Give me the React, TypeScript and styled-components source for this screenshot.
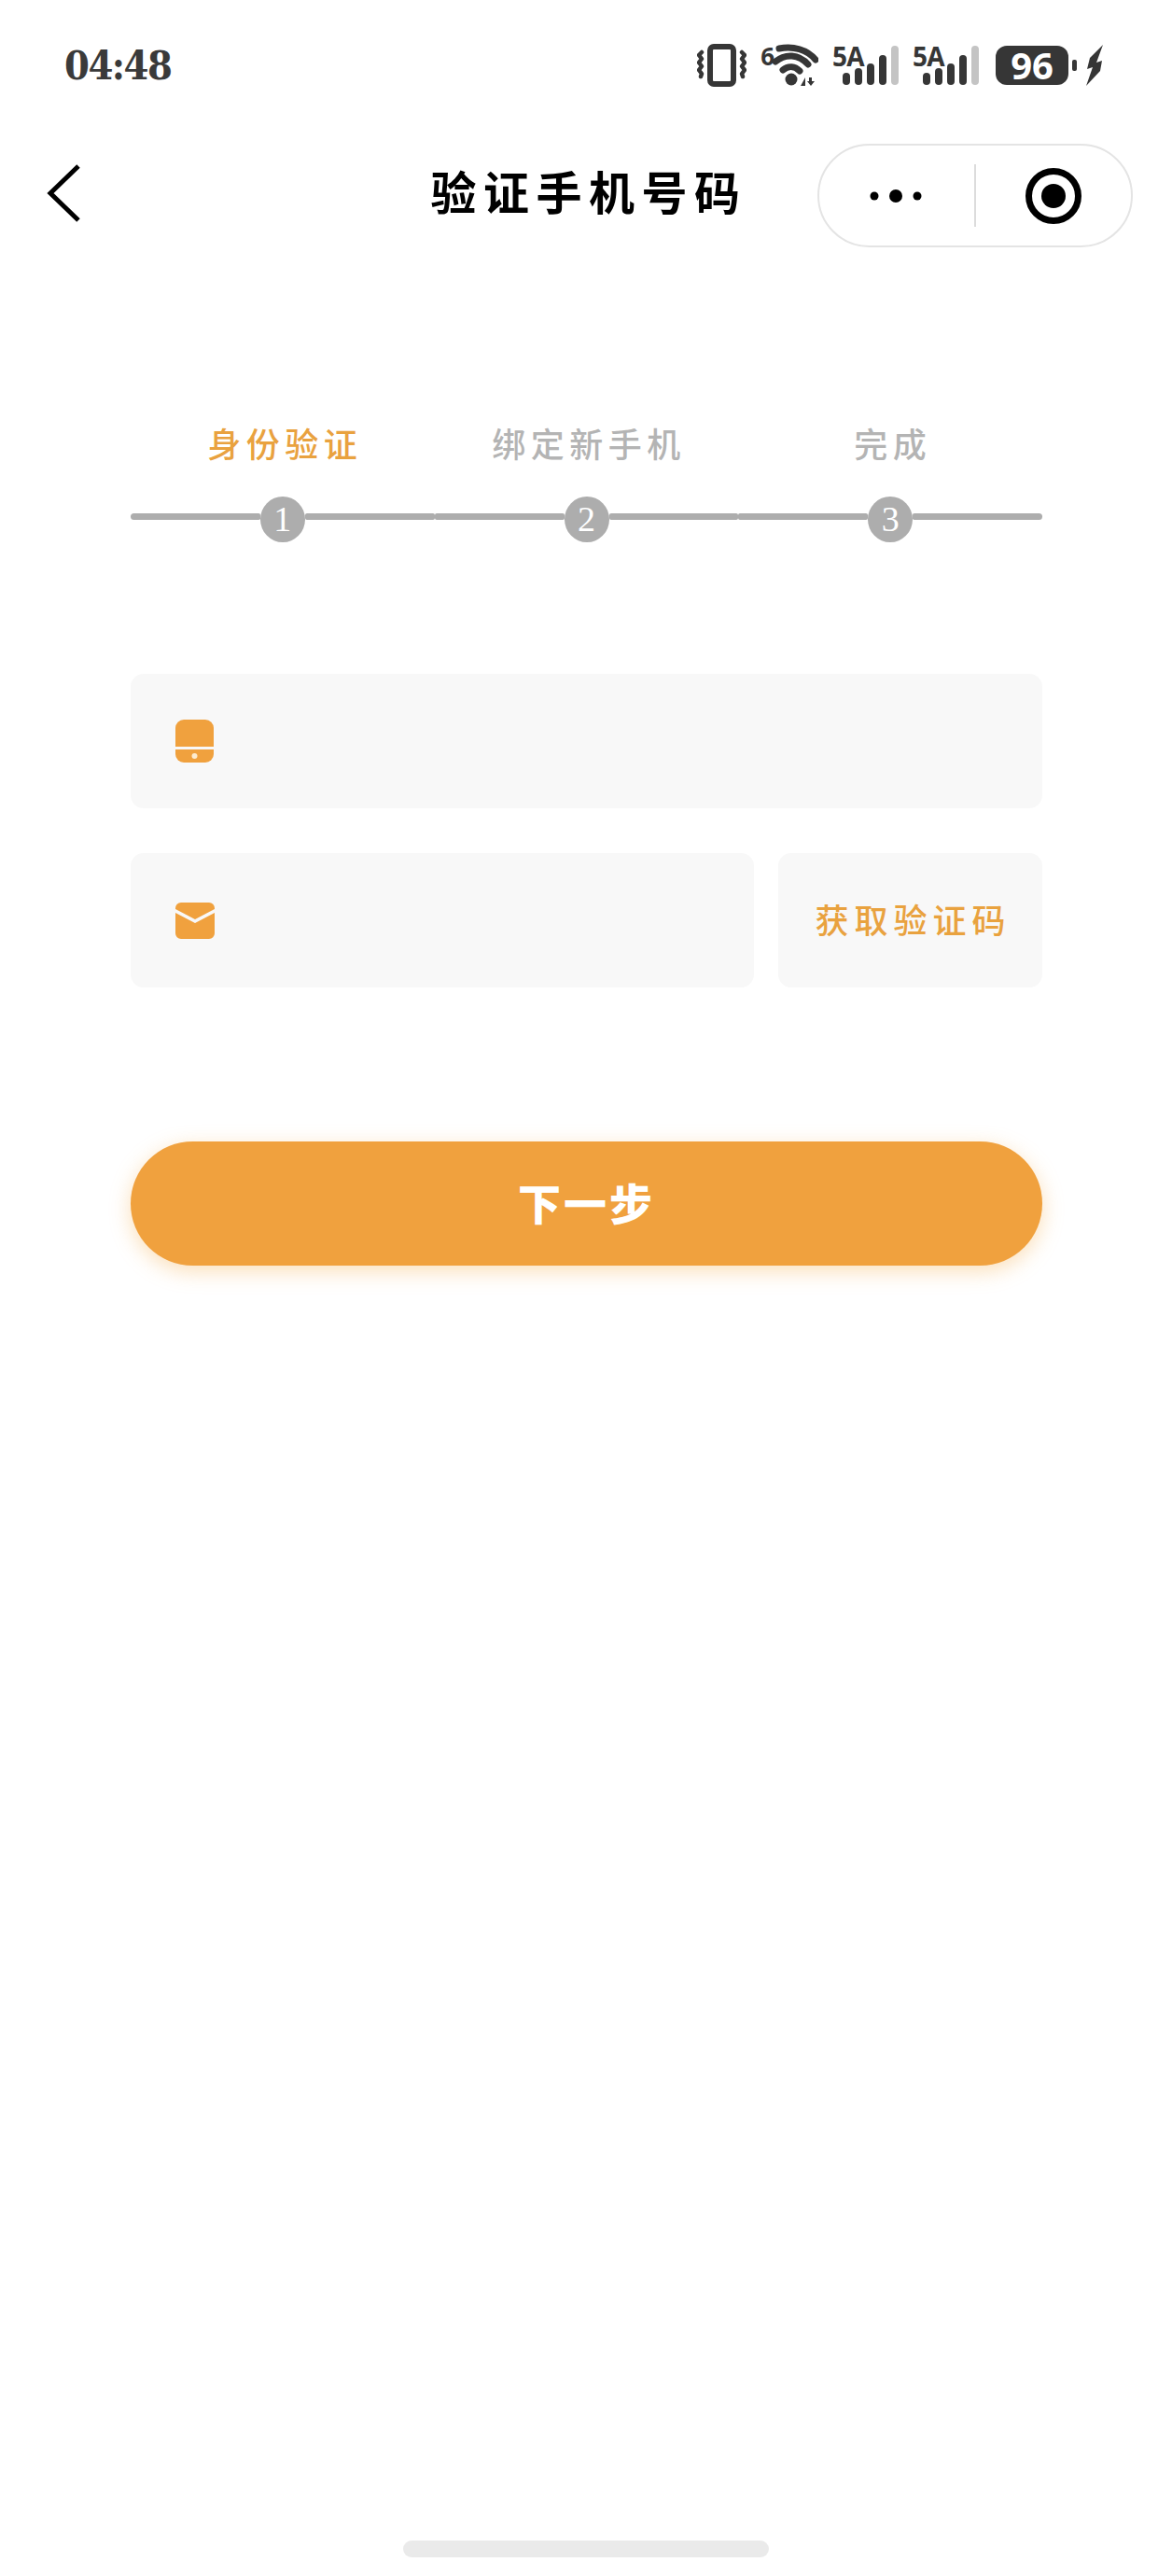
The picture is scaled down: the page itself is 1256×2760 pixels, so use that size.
import React from "react";
import styled, { createGlobalStyle } from "styled-components";

const GlobalStyle = createGlobalStyle`
  html, body {
    margin: 0;
    padding: 0;
    background: #fff;
  }
  * {
    box-sizing: border-box;
  }
`;

const CJK = `"Noto Sans CJK SC", "Liberation Sans", sans-serif`;

const Page = styled.div`
  width: 1256px;
  height: 2760px;
  display: flex;
  flex-direction: column;
  background: #fff;
  font-family: ${CJK};
`;

const StatusBar = styled.div`
  height: 140px;
  padding: 0 74px 0 69px;
  display: flex;
  align-items: center;
  justify-content: space-between;
`;

const Time = styled.div`
  font-family: "DejaVu Serif Condensed", "DejaVu Serif", serif;
  font-weight: 700;
  font-size: 43px;
  letter-spacing: -1.5px;
  color: #3a3a3a;
`;

const StatusIcons = styled.div`
  display: flex;
  align-items: center;
  gap: 15px;
`;

const WifiGroup = styled.div`
  display: flex;
  align-items: flex-start;
`;

const WifiLabel = styled.span`
  font-family: "Open Sans", sans-serif;
  font-weight: 700;
  font-size: 26px;
  line-height: 26px;
  color: #363636;
  margin-right: -3px;
`;

const SignalGroup = styled.div`
  display: grid;
`;

const SignalLabel = styled.span`
  grid-area: 1 / 1;
  font-family: "Open Sans", sans-serif;
  font-weight: 700;
  font-size: 28px;
  line-height: 24px;
  letter-spacing: -0.8px;
  color: #363636;
`;

const SignalBars = styled.svg`
  grid-area: 1 / 1;
  margin-left: 11px;
`;

const BatteryGroup = styled.div`
  display: flex;
  align-items: center;
  margin-left: 3px;
`;

const Battery = styled.div`
  width: 78px;
  height: 42px;
  border-radius: 12px;
  background: #363636;
  color: #fff;
  font-family: "Open Sans", sans-serif;
  font-weight: 700;
  font-size: 40px;
  line-height: 42px;
  text-align: center;
`;

const BatteryNub = styled.div`
  width: 5px;
  height: 12px;
  margin: 0 10px 0 4px;
  border-radius: 2px;
  background: #363636;
`;

const NavBar = styled.div`
  margin-top: 14px;
  height: 111px;
  display: grid;
  grid-template-columns: minmax(0, 1fr) auto minmax(0, 1fr);
  align-items: center;
`;

const BackIcon = styled.svg`
  width: 40px;
  height: 66px;
  margin-left: 49px;
  margin-top: -5px;
`;

const Title = styled.div`
  font-size: 49px;
  font-weight: 700;
  letter-spacing: 7.5px;
  color: #000;
  line-height: 60px;
  margin-top: -12px;
  margin-left: 6px;
`;

const Capsule = styled.div`
  justify-self: end;
  width: 338px;
  height: 111px;
  margin-right: 42px;
  border: 2px solid #e4e4e4;
  border-radius: 56px;
  display: flex;
  align-items: center;
`;

const CapsuleSide = styled.div`
  flex: 1;
  height: 100%;
  display: flex;
  align-items: center;
  justify-content: center;
`;

const CapsuleDivider = styled.div`
  width: 2px;
  height: 67px;
  background: #dcdcdc;
`;

const Stepper = styled.div`
  margin-top: 189px;
  padding: 0 139px 0 140px;
  display: grid;
  grid-template-columns: repeat(3, 1fr);
`;

const Step = styled.div`
  display: flex;
  flex-direction: column;
  align-items: center;
`;

const StepLabel = styled.div<{ $active?: boolean }>`
  height: 44px;
  line-height: 40px;
  font-size: 36px;
  font-weight: 500;
  letter-spacing: 5.5px;
  margin-right: -5px;
  color: ${(props) => (props.$active ? "#e9a23f" : "#b4b4b4")};
`;

const StepTrack = styled.div`
  width: 100%;
  margin-top: 34px;
  display: flex;
`;

const StepLine = styled.div<{ $start?: boolean; $end?: boolean }>`
  flex: 1;
  height: 7px;
  margin-top: 18px;
  background: #adadad;
  border-radius: ${(props) =>
    `${props.$start ? "4px" : "2px"} ${props.$end ? "4px" : "2px"} ${
      props.$end ? "4px" : "2px"
    } ${props.$start ? "4px" : "2px"}`};
`;

const StepCircle = styled.div`
  width: 48px;
  height: 49px;
  border-radius: 50%;
  background: #adadad;
  color: #fff;
  font-family: "Liberation Serif", serif;
  font-size: 38px;
  line-height: 49px;
  text-align: center;
`;

const Form = styled.div`
  margin-top: 141px;
  padding: 0 139px 0 140px;
  display: flex;
  flex-direction: column;
  gap: 48px;
`;

const Row = styled.div`
  display: flex;
  gap: 26px;
`;

const Field = styled.div`
  flex: 1 0 144px;
  height: 144px;
  padding-left: 48px;
  border-radius: 14px;
  background: #f8f8f8;
  display: flex;
  align-items: center;
`;

const CodeButton = styled.button`
  width: 283px;
  height: 144px;
  padding: 0 0 4px 6px;
  border: none;
  border-radius: 14px;
  background: #f8f8f8;
  color: #e9a23f;
  font-family: ${CJK};
  font-size: 36px;
  font-weight: 500;
  letter-spacing: 6px;
`;

const NextButton = styled.button`
  margin: 165px 139px 0 140px;
  height: 133px;
  padding: 0 0 6px;
  border: none;
  border-radius: 67px;
  background: #f0a13e;
  box-shadow: 0 6px 22px rgba(245, 175, 80, 0.4);
  color: #fff;
  font-family: ${CJK};
  font-size: 46px;
  font-weight: 900;
  letter-spacing: 3px;
`;

const HomeIndicator = styled.div`
  width: 392px;
  height: 18px;
  margin: auto auto 20px;
  border-radius: 9px;
  background: #eaeaea;
`;

const VibrateIcon = () => (
  <svg width="53" height="46" viewBox="0 0 53 46">
    <rect x="14" y="3" width="25" height="40" rx="4" fill="none" stroke="#363636" strokeWidth="6" />
    <path d="M5 9 l-3 3 3 4 -3 4 3 4 -3 4 3 4 -1 3" fill="none" stroke="#363636" strokeWidth="4.5" strokeLinecap="round" strokeLinejoin="round" />
    <path d="M48 9 l3 3 -3 4 3 4 -3 4 3 4 -3 4 1 3" fill="none" stroke="#363636" strokeWidth="4.5" strokeLinecap="round" strokeLinejoin="round" />
  </svg>
);

const WifiIcon = () => (
  <WifiGroup>
    <WifiLabel>6</WifiLabel>
    <svg width="50" height="46" viewBox="0 0 50 46">
      <g fill="none" stroke="#363636" strokeLinecap="round" strokeWidth="7">
        <path d="M8 5 C23 2 38 6 47 17" />
        <path d="M4 19 C15 10 29 11 39 22" />
        <path d="M12 28 C18 23 25 24 30 29" />
      </g>
      <circle cx="21" cy="38" r="6.5" fill="#363636" />
      <path d="M31 45 l5 -9 v9z M40 36 h3 v4 h3 l-4 5 -4 -5 h2z" fill="#363636" />
    </svg>
  </WifiGroup>
);

const SignalIcon = () => (
  <SignalGroup>
    <SignalLabel>5A</SignalLabel>
    <SignalBars width="60" height="44" viewBox="0 0 60 44">
      <rect x="0" y="30" width="8" height="13" rx="4" fill="#363636" />
      <rect x="13" y="25" width="8" height="18" rx="4" fill="#363636" />
      <rect x="26" y="20" width="8" height="23" rx="4" fill="#363636" />
      <rect x="39" y="11" width="8" height="32" rx="4" fill="#363636" />
      <rect x="52" y="1" width="8" height="42" rx="4" fill="#c4c4c4" />
    </SignalBars>
  </SignalGroup>
);

const BoltIcon = () => (
  <svg width="18" height="44" viewBox="0 0 18 44">
    <path d="M18 0 L4 14 L1 26 L7 24 L0 44 L15 28 L17 17 L11 19 Z" fill="#363636" />
  </svg>
);

const PhoneIcon = () => (
  <svg width="41" height="46" viewBox="0 0 41 46">
    <path d="M9 0 H32 A9 9 0 0 1 41 9 V29 H0 V9 A9 9 0 0 1 9 0Z" fill="#f0a13e" />
    <path d="M0 32 H41 V37 A9 9 0 0 1 32 46 H9 A9 9 0 0 1 0 37Z" fill="#f0a13e" />
    <circle cx="20.5" cy="39" r="3" fill="#fdeccf" />
  </svg>
);

const MailIcon = () => (
  <svg width="42" height="39" viewBox="0 0 42 39">
    <path d="M6 0 H36 A6 6 0 0 1 42 6 V7 L21 18 L0 7 V6 A6 6 0 0 1 6 0Z" fill="#f0a13e" />
    <path d="M0 11 L21 22 L42 11 V33 A6 6 0 0 1 36 39 H6 A6 6 0 0 1 0 33Z" fill="#f0a13e" />
  </svg>
);

const steps = ["身份验证", "绑定新手机", "完成"];

export default function App() {
  return (
    <Page>
      <GlobalStyle />
      <StatusBar>
        <Time>04:48</Time>
        <StatusIcons>
          <VibrateIcon />
          <WifiIcon />
          <SignalIcon />
          <SignalIcon />
          <BatteryGroup>
            <Battery>96</Battery>
            <BatteryNub />
            <BoltIcon />
          </BatteryGroup>
        </StatusIcons>
      </StatusBar>

      <NavBar>
        <BackIcon viewBox="0 0 40 66">
          <path d="M35 4 L5 33 L35 62" fill="none" stroke="#000" strokeWidth="5" />
        </BackIcon>
        <Title>验证手机号码</Title>
        <Capsule>
          <CapsuleSide>
            <svg width="60" height="16" viewBox="0 0 60 16">
              <circle cx="6" cy="8" r="4.5" fill="#000" />
              <circle cx="29" cy="8" r="7" fill="#000" />
              <circle cx="52" cy="8" r="4.5" fill="#000" />
            </svg>
          </CapsuleSide>
          <CapsuleDivider />
          <CapsuleSide>
            <svg width="62" height="62" viewBox="0 0 62 62">
              <circle cx="31" cy="31" r="26.5" fill="none" stroke="#000" strokeWidth="7" />
              <circle cx="31" cy="31" r="13" fill="#000" />
            </svg>
          </CapsuleSide>
        </Capsule>
      </NavBar>

      <Stepper>
        {steps.map((label, i) => (
          <Step key={label}>
            <StepLabel $active={i === 0}>{label}</StepLabel>
            <StepTrack>
              <StepLine $start={i === 0} />
              <StepCircle>{i + 1}</StepCircle>
              <StepLine $end={i === steps.length - 1} />
            </StepTrack>
          </Step>
        ))}
      </Stepper>

      <Form>
        <Field>
          <PhoneIcon />
        </Field>
        <Row>
          <Field>
            <MailIcon />
          </Field>
          <CodeButton type="button">获取验证码</CodeButton>
        </Row>
      </Form>

      <NextButton type="button">下一步</NextButton>

      <HomeIndicator />
    </Page>
  );
}
